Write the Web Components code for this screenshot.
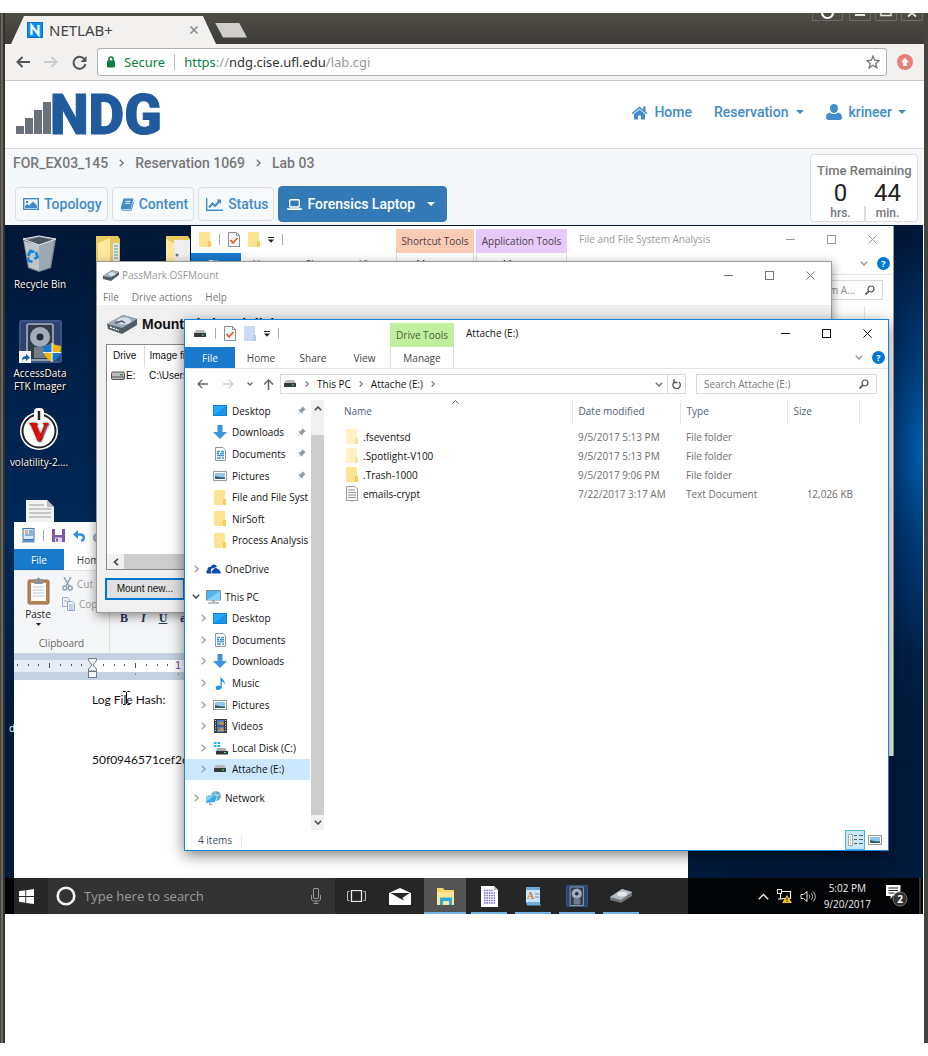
<!DOCTYPE html>
<html lang="en">
<head>
<meta charset="utf-8">
<title>NETLAB+</title>
<style>
html,body{margin:0;background:#fff}
body{padding:13px 0;box-sizing:border-box;min-height:100vh;display:flex;flex-direction:column;
  --win:"Open Sans","Noto Sans",sans-serif;--ubuntu:"Noto Sans","Open Sans",sans-serif;--rb:Roboto,sans-serif;font-family:var(--rb)}
browser-frame{flex:1}
</style>
</head>
<body>
<browser-frame>
  <tab-strip></tab-strip>
  <tool-bar></tool-bar>
  <lab-header></lab-header>
  <lab-bar></lab-bar>
  <remote-desktop></remote-desktop>
</browser-frame>
<script>
const ICONS={
favicon:[16,16,`<rect width="16" height="16" fill="#0d6fc4"/><rect x="1" y="1" width="14" height="14" fill="#0b8ff0"/><path d="M4.500 13V3.500L11.500 12.500V3" fill="none" stroke="#fff" stroke-width="2.200"/>`],
tabx:[8,8,`<path d="M.5.5l7 7M7.500.5l-7 7" stroke="#888" stroke-width="1.500"/>`],
back:[14,12,`<path d="M14 6H1.500M6.500 1L1.500 6l5 5" fill="none" stroke="#555" stroke-width="2"/>`],
fwd:[14,12,`<path d="M0 6h12.500M7.500 1l5 5-5 5" fill="none" stroke="#ccc" stroke-width="2"/>`],
reload:[15,15,`<path d="M12.600 4.500A6 6 0 1 0 13.500 9" fill="none" stroke="#555" stroke-width="2"/><path d="M14.500 1v6h-6z" fill="#555"/>`],
lock:[8,12,`<rect y="4.500" width="8" height="7" rx="1" fill="#0b8043"/><path d="M2 5V3a2 2 0 0 1 4 0v2" fill="none" stroke="#0b8043" stroke-width="1.500"/>`],
star:[14,14,`<path d="M7 1l1.700 4.200 4.500.3-3.500 2.900 1.200 4.400L7 10.300l-3.900 2.500 1.200-4.400L.8 5.500l4.500-.3z" fill="none" stroke="#777" stroke-width="1.300"/>`],
update:[16,16,`<circle cx="8" cy="8" r="8" fill="#e57f78"/><path d="M8 3.800l4 4.400H9.800v3.800H6.200V8.200H4z" fill="#fff"/>`],
home:[17,15,`<path d="M8.500 1.500L.5 8.200l1 1.100 7-5.900 7 5.900 1-1.100-2-1.700V1.300h-2.200v3.300z" fill="#428bca"/><path d="M8.500 4.500L3 9.100V14.500h4v-4h3v4h4V9.100z" fill="#428bca"/>`],
user:[16,16,`<ellipse cx="8" cy="4.500" rx="4" ry="4.500" fill="#428bca"/><path d="M4 8.500C1 9 0 11 0 13.500 0 15 1 16 2.500 16h11c1.500 0 2.500-1 2.500-2.500C16 11 15 9 12 8.500 10 10.500 6 10.500 4 8.500z" fill="#428bca"/>`],
caret:[8,4,`<path d="M0 0h8L4 4z" fill="currentColor"/>`],
caretS:[5,3,`<path d="M0 0h5L2.500 3z" fill="currentColor"/>`],
pic:[16,12,`<rect x=".7" y=".7" width="14.600" height="10.600" fill="none" stroke="#428bca" stroke-width="1.400"/><circle cx="4" cy="4" r="1.300" fill="#428bca"/><path d="M2 10V8l2.500-2 1.500 1.500L10 3.500l4 4V10z" fill="#428bca"/>`],
book:[14,13,`<path d="M3.500 .5h10L10.500 11H2C.8 11 .8 9.800 1 9z" fill="#428bca"/><path d="M1.500 10.500c-.3 1.200.5 1.700 1.500 1.700h8.200L13.500 4" fill="none" stroke="#428bca" stroke-width="1"/><path d="M5.500 3.300h5M5 5.300h5" stroke="#fff" stroke-width=".9"/>`],
chart:[17,13,`<path d="M.7 0v12.300H17" fill="none" stroke="#428bca" stroke-width="1.400"/><path d="M3 9.500l3.500-4 2.500 2.500 4.500-5" fill="none" stroke="#428bca" stroke-width="2"/><path d="M10.500 1.500H15V6z" fill="#428bca"/>`],
laptop:[15,11,`<rect x="2.700" y=".7" width="9.600" height="7.300" rx="1" fill="none" stroke="#fff" stroke-width="1.400"/><path d="M0 9.200h15v.6c0 .6-.5 1.200-1.200 1.200H1.200C.5 11 0 10.400 0 9.800z" fill="#fff"/>`],
recycle:[36,40,`<path d="M1 5L17 2l17 3-5 29-12 4-11-4z" fill="#7f8d98"/><path d="M3 7l14-4 15 3-15 5z" fill="#4a555e"/><path d="M2 7l15 4v26L7 33z" fill="#c6cdd3" opacity=".9"/><path d="M17 11l15-5-4 27-11 4z" fill="#a1acb5" opacity=".9"/><path d="M1 5L17 2l17 3-17 6z" fill="none" stroke="#e8ecef"/><path d="M6 22l2.500-5 4 1M14 18l1.500 5-3 2M10.500 28l-4-1.500-.5-3" fill="none" stroke="#1a86d8" stroke-width="2.800"/>`],
ftk:[43,43,`<rect width="43" height="43" rx="2" fill="#2a4370"/><rect x="1" y="1" width="41" height="41" rx="2" fill="none" stroke="#4a669a"/><rect x="8" y="4" width="26" height="36" rx="2" fill="#323d4b" stroke="#8d9bab" stroke-width="2"/><circle cx="21" cy="17" r="10" fill="#a2adb8"/><circle cx="21" cy="17" r="3.500" fill="#1c2a3c"/><path d="M15 27h13v11H15z" fill="#707d8b"/><path d="M24 26q5 0 9-3 4 3 9 3c0 8-3 13-9 16-6-3-9-8-9-16z" fill="#f2b50a"/><path d="M24 26q5 0 9-3v9.500h-8.500zM33 32.500h8.500C40.500 37 37.500 40 33 42z" fill="#1677d2"/><path d="M24 32.500h18M33 23v19" stroke="#fff"/><rect y="31" width="12" height="12" fill="#f2f5fa"/><path d="M3 41c0-4 2-5 4-5v-2l4 3.500L7 41v-2c-2 0-3 0-4 2z" fill="#1b5faf"/>`],
vol:[40,44,`<circle cx="20" cy="23" r="19" fill="#fff"/><circle cx="20" cy="23" r="16.500" fill="#fff" stroke="#222" stroke-width="2"/><rect x="15" y="0" width="10" height="12" rx="4" fill="#fff"/><path d="M20 3v9" stroke="#222" stroke-width="2.500"/><text x="20" y="33" text-anchor="middle" font-family="Liberation Serif" font-weight="700" font-size="27" fill="#f00">V</text>`],
page:[28,22,`<path d="M0 0h21l7 7v15H0z" fill="#f2f2f2"/><path d="M21 0v7h7z" fill="#bbb"/><path d="M3 5h15M3 9h22M3 13h22M3 17h22" stroke="#999" stroke-width="1.200"/>`],
deskfolder:[28,28,`<path d="M0 1h22l2 3v24H0z" fill="#eac75f"/><path d="M2 8L14 3v25H2z" fill="#ffe9a0"/><path d="M17 8h6v20h-6z" fill="#dfeaf0"/><path d="M18 11h4M18 14h4M18 17h4M18 20h4M18 23h4" stroke="#49a"/>`],
deskfolder2:[28,28,`<path d="M0 1h22l2 3v24H0z" fill="#eac75f"/><path d="M0 4l8 4v20H0z" fill="#ffe9a0"/><path d="M8 5h16v23H8z" fill="#eee"/><circle cx="11" cy="20" r="1.500" fill="#777"/>`],
folder:[12,15,`<path d="M0 1C0 .4.400 0 1 0h10v15H1c-.6 0-1-.4-1-1z" fill="#fde492"/><path d="M9 9h3v6H9z" fill="#f5cc55"/>`],
folderdim:[12,15,`<path d="M0 1C0 .4.400 0 1 0h10v15H1c-.6 0-1-.4-1-1z" fill="#fef1c5"/><path d="M9 9h3v6H9z" fill="#fae3a2"/>`],
folderblue:[12,15,`<path d="M0 0h11v9h1v6H0z" fill="#c9dcf3"/><path d="M9 9h3v6H9z" fill="#b5ceec"/>`],
check:[12,15,`<path d="M.5.5h8l3 3v11H.5z" fill="#f7f8fa" stroke="#8a8f98"/><path d="M8.500.5v3h3" fill="none" stroke="#8a8f98"/><path d="M2.500 8l2.500 3 4.500-5" fill="none" stroke="#ea5b2b" stroke-width="1.800"/>`],
txt:[12,15,`<path d="M.5.5h8.500l2.500 2.500v11.500H.5z" fill="#fafafa" stroke="#999"/><path d="M2 4h7M2 6.500h8M2 9h8M2 11.500h8" stroke="#888" stroke-width=".9"/>`],
qa:[6,6,`<path d="M0 .5h6" stroke="#222"/><path d="M0 2.500h6L3 5.800z" fill="#222"/>`],
drive:[14,8,`<path d="M3 0h8l2 3H1z" fill="#b7babd"/><rect x="1" y="3" width="12" height="4" rx=".5" fill="#3a3a3a"/><rect x="9" y="4.500" width="2" height="1" fill="#3f5"/>`],
driveC:[15,15,`<path d="M1 2h2.500v2H1zM4.500 2H7v2H4.500zM1 5h2.500v2H1zM4.500 5H7v2H4.500z" fill="#10b4f4"/><path d="M4 8h8l2 3H3z" fill="#a9acaf"/><rect x="3" y="11" width="12" height="3.500" rx=".5" fill="#333"/><rect x="11" y="12" width="2" height="1" fill="#3f5"/>`],
hdd:[14,10,`<rect x=".5" y="1" width="13" height="7.500" rx="1.500" fill="#bdbdbd" stroke="#555"/><path d="M1 6h12" stroke="#555"/><rect x="9" y="3" width="3" height="1.500" fill="#486"/>`],
osf:[30,20,`<path d="M0 10L16 1l14 4v6L15 20 1 15z" fill="#505c64"/><path d="M0 10L16 1l14 4-15 9z" fill="#9aacb8"/><ellipse cx="17" cy="7" rx="7" ry="3.500" fill="#d7e1e7"/><path d="M8 9l7-2 3 2" stroke="#556" fill="none" stroke-width="1.500"/><path d="M3 13l9 3.500" stroke="#fff" stroke-width="1.500" stroke-dasharray="2 1"/>`],
osfs:[16,11,`<path d="M0 6L9 0l7 2v3L8 11 0 9z" fill="#505c64"/><path d="M0 6L9 0l7 2-8 5.500z" fill="#9aacb8"/><ellipse cx="9" cy="4" rx="3.500" ry="1.800" fill="#d7e1e7"/>`],
osft:[22,14,`<path d="M0 8L12 0l10 3v4L11 14 0 11z" fill="#6d7378"/><path d="M0 8L12 0l10 3-11 8z" fill="#b4bbc0"/><ellipse cx="12" cy="5" rx="5" ry="2.600" fill="#e2e6e8"/>`],
desk:[14,11,`<rect width="14" height="11" fill="#0b82dc"/><rect x="1" y="1" width="12" height="9" fill="#2ba6f7"/><path d="M1 10L13 1v9z" fill="#1695ee"/>`],
down:[14,14,`<path d="M4.500 0h5v7H14L7 14 0 7h4.500z" fill="#3b94e0"/>`],
docs:[11,14,`<path d="M.5.5h7.500l2.500 2.500v10.500H.5z" fill="#fff" stroke="#8e969e"/><path d="M2 4.500h3M6 4.500h3M2 6.500h2M5 6.500h4M2 8.500h7M2 11h4M7 11h2" stroke="#3d96cd" stroke-width="1.300"/>`],
pics:[14,10,`<rect x=".5" y=".5" width="13" height="9" fill="#fff" stroke="#999"/><rect x="2" y="2" width="10" height="6" fill="#8fc7ee"/><path d="M2 8V5l4 1 6 .5V8z" fill="#31615f"/>`],
cloud:[15,10,`<path d="M2 9.500C0 9.500-.3 7 1.500 6 1 3.500 3.500 2 5 3 6-.5 10.500 0 11 3L6 4.500C4.500 5 4.500 8 6 9.500z" fill="#0f4db0"/><path d="M7 9.500c-2-.5-1.500-3 0-3.200C7.500 3.500 11 3 12 5.500c1.500-.3 2 .8 1.800 1.800 1.500.2 1.500 2.200 0 2.200z" fill="#0f4db0"/>`],
pc:[15,14,`<rect x=".5" y=".5" width="14" height="9.500" fill="#50b4f0" stroke="#7b8c99"/><path d="M1 10L14 1v9z" fill="#85cef8"/><path d="M6 10h3v2H6z" fill="#aaa"/><path d="M2 13h11" stroke="#8b99a3" stroke-width="1.200"/>`],
music:[11,14,`<path d="M5.500 0C6 3 10.500 3.500 9.500 8.500 9 6 7 5.500 6.800 5.500V11C6.800 12.800 5 14 3 14S.5 12.500.7 11.500C1 10 3.500 9 5.500 10z" fill="#1e96ec"/>`],
video:[13,14,`<rect width="13" height="14" fill="#393b40"/><rect x="3" y="1" width="7" height="5.500" fill="#4a7fc0"/><rect x="3" y="7.500" width="7" height="5.500" fill="#4a7fc0"/><path d="M4 5l4-3 2 4zM4 12l4-4 2 4z" fill="#e08c2c"/><path d="M1.500 1v12M11.500 1v12" stroke="#ddd" stroke-dasharray="1 1.500"/>`],
net:[15,14,`<circle cx="10" cy="5" r="4.800" fill="#5aa9c9"/><path d="M8 1c3 2 4 5 2 8M6 4h8" stroke="#c9e6ef" fill="none"/><path d="M0 5l9-1v7l-9 1z" fill="#39a9ee"/><path d="M0 5l9-1-9 7z" fill="#82cdf6"/><path d="M3 12l4 1.500-4 .5" fill="#999"/>`],
pin:[9,9,`<path d="M5.500.3L8.700 3.500 7.500 3.900 5.800 5.700 5.500 7.800 3.600 5.900.5 8.500 3.100 5.400 1.200 3.500 3.300 3.200 5.100 1.500z" fill="#8c99a5"/>`],
chevR:[5,8,`<path d="M.7.7L4.200 4 .7 7.300" fill="none" stroke="currentColor" stroke-width="1.300"/>`],
chevRs:[4,6,`<path d="M.7.5L3.200 3 .7 5.500" fill="none" stroke="currentColor" stroke-width="1.200"/>`],
chevD:[8,5,`<path d="M.8.8L4 4 7.200.8" fill="none" stroke="currentColor" stroke-width="1.500"/>`],
chevDs:[6,4,`<path d="M.5.5L3 3 5.500.5" fill="none" stroke="currentColor" stroke-width="1.300"/>`],
chevU:[8,5,`<path d="M.8 4.200L4 1l3.200 3.200" fill="none" stroke="currentColor" stroke-width="1.500"/>`],
chevUthin:[11,7,`<path d="M.8 6.200L5.500 1.500l4.700 4.700" fill="none" stroke="currentColor" stroke-width="1.400"/>`],
chevL:[6,8,`<path d="M5 .8L1.500 4 5 7.200" fill="none" stroke="#444" stroke-width="1.600"/>`],
sortU:[7,4,`<path d="M.5 3.500l3-3 3 3" fill="none" stroke="#666"/>`],
aL:[11,10,`<path d="M11 5H1M5 1L1 5l4 4" fill="none" stroke="currentColor" stroke-width="1.300"/>`],
aR:[11,10,`<path d="M0 5h10M6 1l4 4-4 4" fill="none" stroke="currentColor" stroke-width="1.300"/>`],
aU:[11,11,`<path d="M5.500 11V1M1 5.500L5.500 1 10 5.500" fill="none" stroke="currentColor" stroke-width="1.500"/>`],
refresh:[9,10,`<path d="M2.500 2.800A3.700 3.700 0 1 0 7 3" fill="none" stroke="#555" stroke-width="1.300"/><path d="M2 0v3.500h3.500" fill="none" stroke="#555" stroke-width="1.300"/>`],
mag:[10,10,`<circle cx="6" cy="4" r="3" fill="none" stroke="#555" stroke-width="1.200"/><path d="M3.800 6.200L.5 9.500" stroke="#555" stroke-width="1.700"/>`],
help:[13,13,`<circle cx="6.500" cy="6.500" r="6.500" fill="#0078d7"/><text x="6.500" y="10" text-anchor="middle" font-family="Open Sans" font-weight="700" font-size="9" fill="#fff">?</text>`],
min:[9,9,`<path d="M0 4.500h9" stroke="currentColor"/>`],
max:[9,9,`<rect x=".5" y=".5" width="8" height="8" fill="none" stroke="currentColor"/>`],
cls:[9,9,`<path d="M.4.4l8.200 8.200M8.600.4L.4 8.600" stroke="currentColor"/>`],
details:[15,12,`<path d="M.5.5h4v11h-4z" fill="#fff" stroke="#aaa"/><path d="M2 3h1M2 6h1" stroke="#3a8"/><path d="M2 9h1" stroke="#e55"/><path d="M6 1.500h3M11 1.500h4M6 5.500h3M11 5.500h4M6 9.500h3M11 9.500h4" stroke="#59636c"/>`],
wp:[13,15,`<rect x="1" y=".5" width="11" height="11" fill="#d8e9f8" stroke="#3f78ae"/><path d="M3 3h3M3 5h3" stroke="#e77d2a"/><path d="M7 3h4M7 5h4M3 7h8" stroke="#3f78ae"/><path d="M1 12h11l1 2.500H0z" fill="#5b93c4"/>`],
save:[13,13,`<path d="M0 0h13v13H0z" fill="#7b5ba6"/><rect x="3" width="7" height="6" fill="#fff"/><rect x="3" y="8.500" width="7" height="4.500" fill="#e3dcec"/><rect x="4" y="9.500" width="2" height="3" fill="#7b5ba6"/>`],
undo:[12,12,`<path d="M3 4.500h4c5 0 5 5.500 1 6.500" fill="none" stroke="#2f95dc" stroke-width="2.500"/><path d="M0 4.500L5 0v9z" fill="#2f95dc"/>`],
redo:[12,12,`<path d="M9 4.500H5C0 4.500 0 10 4 11" fill="none" stroke="#9fb1c8" stroke-width="2.500"/><path d="M12 4.500L7 0v9z" fill="#9fb1c8"/>`],
paste:[23,28,`<rect x="1" y="3" width="21" height="24" rx="1.500" fill="#b98352" stroke="#9d6b3e"/><rect x="4" y="6" width="15" height="18" fill="#fdfdfd"/><path d="M6 10h11M6 13h11M6 16h11M6 19h11" stroke="#bcd"/><rect x="7" y="2" width="9" height="5" rx="1" fill="#8b929a"/><circle cx="11.500" cy="2" r="1.500" fill="#8b929a"/>`],
cut:[11,14,`<path d="M2 0l5 9M9 0L4 9" stroke="#8d9db2" stroke-width="1.500"/><circle cx="2.800" cy="11" r="2" fill="none" stroke="#8d9db2" stroke-width="1.400"/><circle cx="8.200" cy="11" r="2" fill="none" stroke="#8d9db2" stroke-width="1.400"/>`],
copy:[13,14,`<path d="M.5.5h5l2 2v7h-7z" fill="#eef3fa" stroke="#93a8c6"/><path d="M5.500 4.500h5l2 2v7h-7z" fill="#eef3fa" stroke="#93a8c6"/><path d="M7 8h4M7 10h4M7 12h4M2 4h3" stroke="#93a8c6"/>`],
ibeam:[7,14,`<path d="M0 .5h2.500l1 1 1-1H7M3.500 1.500v11M0 13.500h2.500l1-1 1 1H7" stroke="#111" fill="none"/>`],
start:[15,15,`<path d="M0 2.200L6.300 1.300V7H0zM7.200 1.200L15 0v7H7.200zM0 8h6.300v5.700L0 12.800zM7.200 8H15v7l-7.800-1.100z" fill="#fff"/>`],
cortana:[20,20,`<circle cx="10" cy="10" r="8.300" fill="none" stroke="#f2f2f2" stroke-width="2.600"/>`],
mic:[10,16,`<rect x="2.500" y=".5" width="5" height="10" rx=".5" fill="none" stroke="#999"/><path d="M.5 7v4c0 1 1 2 2 2h5c1 0 2-1 2-2V7M5 13v2.500M2.500 15.500h5" fill="none" stroke="#999"/>`],
tasks:[19,12,`<rect x="4.500" y=".5" width="10" height="11" fill="none" stroke="#eee" stroke-width="1.200"/><path d="M2.500 1.500H.5v9h2M16.500 1.500h2v9h-2" fill="none" stroke="#bbb"/>`],
mail:[22,17,`<path d="M0 5L11 0l11 5v12H0z" fill="#fff"/><path d="M1.500 5h19l-7 5 1.500 2.500L11 10.500z" fill="#262626"/>`],
exp:[19,17,`<path d="M1 0h6l1.500 2H18v15H1z" fill="#fbd667"/><path d="M1 4h17v13H1z" fill="#fde697"/><path d="M4 9.500h12V17h-3v-4H7v4H4z" fill="#2ea8e0"/>`],
hexa:[17,21,`<path d="M0 0H13L17 4v17H0z" fill="#fff"/><path d="M13 0v4h4z" fill="#bbb"/><path d="M3 4.500h9M3 7h11M3 9.500h11M3 12h11M3 14.500h11M3 17h11" stroke="#6a6ae0" stroke-width="1.500" stroke-dasharray="1.500 .9"/>`],
wpt:[16,19,`<rect x="1" width="14" height="16" fill="#c9e6fa"/><rect x="1" width="14" height="3" fill="#6aa9d8"/><text x="2" y="12" font-family="Liberation Serif" font-weight="700" font-size="10" fill="#e4762d">A</text><path d="M10 7h4M10 10h4" stroke="#5a92be"/><path d="M1 15h13l2 3.500H2z" fill="#72afd8"/>`],
tnet:[15,14,`<path d="M3.500 2.500h10v7h-8M3.500 5v5M1 10h5" fill="none" stroke="#eee" stroke-width="1.200"/><rect x=".5" y=".5" width="4" height="4" fill="#111" stroke="#eee"/><path d="M10 6l5 8H5z" fill="#f5c211"/><path d="M10 8.500v3M10 12v1" stroke="#222"/>`],
sound:[16,13,`<path d="M1 4.500h2.500L7 1.500v10L3.500 8.500H1z" fill="none" stroke="#eee"/><path d="M9 4.500c1 1 1 3 0 4M11 3c2 2 2 5 0 7M13 1.500c3 3 3 7 0 10" fill="none" stroke="#ccc"/>`],
notif:[22,22,`<path d="M0 0h14.500v11H7l-2.500 3v-3H0z" fill="#fff"/><path d="M2.500 3h9.500M2.500 5.500h9.500M2.500 8h6" stroke="#222"/><circle cx="14" cy="14" r="7" fill="#333" stroke="#777"/><text x="14" y="17.500" text-anchor="middle" font-family="Open Sans" font-weight="700" font-size="10" fill="#fff">2</text>`],
frameI:[111,8,`<g fill="none" stroke="#6d6b63"><path d="M.5 0v7.500h30V0M37.500 0v7.500h21V0M63.500 0v7.500h21V0M89.500 0v7.500h21V0"/></g><path d="M10 0a5.500 5 0 0 0 11 0" fill="none" stroke="#fff" stroke-width="2.200"/><path d="M43 2h10" stroke="#e8e8e4" stroke-width="2"/><path d="M69 0v2.500h10V0" fill="none" stroke="#e8e8e4" stroke-width="1.500"/><path d="M96 3.500L100 0l4 3.500" fill="none" stroke="#e8e8e4" stroke-width="1.800"/>`],
ruler:[171,27,`<rect width="171" height="27" fill="#c5d1e1"/><rect y="7" width="78" height="12" fill="#e7ecf4"/><rect x="78" y="7" width="93" height="12" fill="#fff"/><path d="M3.500 11v2M14.500 11v2M24.500 11v2M35.500 10v5M46.500 11v2M57.500 11v2M67.500 11v2M89.500 11v2M100.500 11v2M110.500 11v2M121.500 10v5M132.500 11v2M143.500 11v2M153.500 11v2" stroke="#44546c"/><path d="M121.500 20v2M164.500 20v2" stroke="#8795a8"/><path d="M74.500 5.500h8v2L79 12l3.500 4v2h-8v-2l3.500-4-3.500-4.500z" fill="#f4f6f9" stroke="#6b7c92"/><rect x="74.500" y="18.500" width="8" height="6" fill="#f4f6f9" stroke="#6b7c92"/><text x="161" y="16" font-family="Liberation Sans" font-size="11" fill="#6b3fa0">1</text>`]
};
function define(tag,css,html){
  const t=document.createElement('template');
  t.innerHTML='<style>:host,*{box-sizing:border-box}button,input,textarea{font:inherit;color:inherit;background:none;border:0;padding:0;margin:0;border-radius:0;min-width:0}a{color:inherit;text-decoration:none}'+css+'</style>'+html;
  customElements.define(tag,class extends HTMLElement{
    constructor(){super();this.attachShadow({mode:'open'}).append(t.content.cloneNode(true));}
  });
}
customElements.define('ui-icon',class extends HTMLElement{
  connectedCallback(){
    if(this.shadowRoot)return;
    const [w,h,b]=ICONS[this.getAttribute('name')];
    this.attachShadow({mode:'open'}).innerHTML=`<style>:host{display:block;flex:none}svg{display:block}</style><svg width="${w}" height="${h}" viewBox="0 0 ${w} ${h}" aria-hidden="true">${b}</svg>`;
  }
});
const I=n=>`<ui-icon name="${n}"></ui-icon>`;

define('browser-frame',`
:host{display:flex;flex-direction:column;padding:0 4px 0 5px;background:linear-gradient(90deg,#45443f 0 1px,#6a675e 1px 3px,#33322e 3px 5px,#45443f 5px)}
.page{flex:1;background:#fff;display:flex;flex-direction:column}`,
`<div class="page"><slot></slot></div>`);

define('tab-strip',`
:host{display:flex;height:31px;background:linear-gradient(#504e47,#3c3b37);padding:3px 1px 0 6px;align-items:flex-end;font:15px/20px var(--ubuntu);color:#444}
.tab{width:205px;height:28px;background:#f2f1f0;clip-path:polygon(0 100%,13px 0,192px 0,100% 100%);display:flex;align-items:center;padding:0 18px 0 16px;gap:6px}
.tab span{flex:1}
.new{width:32px;height:15px;background:#cfcecc;clip-path:polygon(0 0,24px 0,100% 100%,8px 100%);align-self:center;margin-left:-1px}
.ctl{margin-left:auto;align-self:flex-start;height:8px;margin-top:-3px}`,
`<div class="tab">${I('favicon')}<span>NETLAB+</span><button aria-label="Close tab">${I('tabx')}</button></div><button class="new" aria-label="New tab"></button><div class="ctl">${I('frameI')}</div>`);

define('tool-bar',`
:host{display:flex;height:37px;align-items:center;background:#f2f1f0;border-bottom:1px solid #ccc;padding:0 11px 0 11px;font:13px/20px var(--ubuntu);gap:14px}
.url{flex:1;height:28px;border:1px solid #b0b0b0;border-radius:3px;background:#fff;display:flex;align-items:center;padding:0 6px 0 9px;gap:9px;color:#0b8043;margin:0 -4px 0 -4px}
.sep{width:1px;height:16px;background:#bbb}
.t{flex:1;color:#999}.t b{font-weight:400;color:#0b8043}.t i{font-style:normal;color:#333}`,
`<button aria-label="Back">${I('back')}</button><button aria-label="Forward">${I('fwd')}</button><button aria-label="Reload">${I('reload')}</button>
<div class="url">${I('lock')}<span>Secure</span><span class="sep"></span><div class="t" role="textbox" aria-label="Address"><b>https</b>://<i>ndg.cise.ufl.edu</i>/lab.cgi</div><button aria-label="Bookmark">${I('star')}</button></div><button aria-label="Update">${I('update')}</button>`);

define('lab-header',`
:host{display:flex;height:68px;align-items:center;justify-content:space-between;border-bottom:1px solid #ddd;padding:0 18px 5px 11px;font:500 14px/20px var(--rb);color:#428bca}
.logo,nav,a{display:flex;align-items:center}
.logo{height:62px}
.logo svg{display:block}
nav{gap:22px}a{gap:6px}.c{gap:8px}`,
`<a class="logo" href="#" aria-label="NDG"><svg width="150" height="68" viewBox="0 0 150 68"><path d="M0 48h8v8H0zM9 40h8v16H9zM18 32h8v24h-8zM27 24h8v32h-8z" fill="#6a717c"/><text x="34" y="56" font-family="Roboto" font-weight="900" font-size="55" fill="#205b9d" stroke="#205b9d" stroke-width="1">NDG</text></svg></a>
<nav><a href="#">${I('home')}Home</a><a href="#" class="c">Reservation ${I('caret')}</a><a href="#">${I('user')}krineer ${I('caret')}</a></nav>`);

define('lab-bar',`
:host{display:flex;justify-content:space-between;height:76px;background:#f4f8fb;border-right:1px solid #fff;padding:5px 5px 3px 8px;font:500 14px/20px var(--rb);color:#777}
.l{display:flex;flex-direction:column;justify-content:space-between}
nav{display:flex;gap:11px;align-items:center;line-height:18px}
.btns{display:flex;align-items:center;gap:4px;padding-left:2px;color:#428bca}
button{height:34px;border:1px solid #ddd;border-radius:4px;padding:0 5px 0 7px;display:flex;align-items:center;gap:5px;background:#f7fafc}
button.p{height:36px;background:#337ab7;color:#fff;border-color:#337ab7;padding:0 11px 0 8px}
.p ui-icon:last-child{margin-left:7px}
.time{width:108px;height:68px;border:1px solid #ddd;border-radius:4px;background:#fff;text-align:center;font-size:13px;line-height:18px;padding:7px 6px 0;white-space:nowrap}
.row{display:flex}.row div{flex:1;font-size:12px;line-height:15px;position:relative}
.row b{display:block;font-weight:400;font-size:24px;line-height:26px;color:#222}
.row div+div::before{content:"";position:absolute;left:0;bottom:-1px;width:2px;height:16px;background:#ddd}`,
`<div class="l"><nav><a href="#">FOR_EX03_145</a>${I('chevR')}<a href="#">Reservation 1069</a>${I('chevR')}<a href="#">Lab 03</a></nav>
<div class="btns"><button>${I('pic')}Topology</button><button>${I('book')}Content</button><button>${I('chart')}Status</button><button class="p">${I('laptop')}Forensics Laptop ${I('caret')}</button></div></div>
<div class="time">Time Remaining<div class="row"><div><b>0</b>hrs.</div><div><b>44</b>min.</div></div></div>`);

define('win-controls',`
:host{display:flex;height:27px;flex:none}
button{width:41px;display:grid;place-items:center}`,
`<button aria-label="Minimize">${I('min')}</button><button aria-label="Maximize">${I('max')}</button><button aria-label="Close">${I('cls')}</button>`);

define('desk-icon',`
:host{display:flex;flex-direction:column;align-items:center;width:80px;gap:4px;font:10px/13px var(--win);color:#fff;text-align:center;text-shadow:1px 1px 2px #000,0 0 2px #000}`,
`<slot name="icon"></slot><span><slot></slot></span>`);

define('nav-item',`
:host{display:flex;align-items:center;flex:1;padding-left:15px;white-space:nowrap;overflow:hidden}
:host([top]){padding-left:8px}
:host([sel]){background:#cce8ff}
.ch{width:6px;color:#a0a0a0;display:flex;justify-content:center}
.ic{width:16px;margin:0 4px 0 6px;display:flex;justify-content:center}
.tx{overflow:hidden;flex:1}
::slotted([slot=pin]){margin-right:4px}`,
`<span class="ch"><slot name="chev"></slot></span><span class="ic"><slot name="icon"></slot></span><span class="tx"><slot></slot></span><slot name="pin"></slot>`);
const N=(icon,text,o='')=>`<nav-item ${o.includes('t')?'top':''} ${o.includes('s')?'sel':''}>${o.includes('c')?'<ui-icon slot="chev" name="chevR"></ui-icon>':''}${o.includes('d')?'<ui-icon slot="chev" name="chevD" style="color:#444"></ui-icon>':''}<ui-icon slot="icon" name="${icon}"></ui-icon>${text}${o.includes('p')?'<ui-icon slot="pin" name="pin"></ui-icon>':''}</nav-item>`;

const ribbon=`
.title{display:flex;height:27px}
.quick{width:205px;display:flex;align-items:center;padding:0 0 0 8px;gap:8px}
.sep{width:1px;height:11px;background:#aaa}
.ctx{width:64px;height:24px;margin-top:3px;display:grid;place-items:center;line-height:12px}
.name{padding-left:12px;flex:1;line-height:27px;white-space:nowrap}
.tabs{display:flex;height:22px;border-bottom:1px solid #e3e3e3;padding-right:3px}
.tabs button{width:52px;color:#444}
.tabs .file{width:50px;height:21px;background:#1979ca;color:#fff}
.tabs .man{width:64px;border:1px solid #ddd;border-width:0 1px}
.tail{margin-left:auto;display:flex;align-items:center;gap:9px;color:#999}`;

define('explorer-window',`
:host{display:flex;flex-direction:column;background:#fff;border:1px solid #1883d7;box-shadow:0 4px 14px rgba(0,0,0,.5);font:10px/14px var(--win);color:#111}
${ribbon}
.addr{display:flex;align-items:center;height:30px;margin-bottom:1px;padding:0 11px 0 12px;gap:10px;color:#666}
.addr .dim{color:#ccc;margin-left:5px}.addr .hist{margin-left:3px}
.box{height:20px;border:1px solid #d9d9d9;display:flex;align-items:center}
.path{flex:1;margin-left:-4px;padding-left:2px;gap:8px;color:#111}
.path ui-icon{color:#777}
.path .r{margin-left:auto}
.path .rf{border-left:1px solid #d9d9d9;height:18px;width:18px;display:grid;place-items:center;margin-left:-4px}
.search{width:181px;padding:0 7px}
.search input{flex:1;color:#777;width:100px}
.search input::placeholder{color:#777;opacity:1}
.main{display:flex;flex:1;min-height:0}
.nav{width:125px;display:flex;flex-direction:column;gap:7px;margin-right:1px}
.g{display:flex;flex-direction:column}.g1{height:151px}.g2{height:21px}.g3{height:194px}
.sb{width:13px;background:#cdcdcd;display:flex;flex-direction:column;justify-content:space-between}
.sb span{background:#f0f0f0;display:flex;justify-content:center;color:#444}
.sb .u{height:35px;padding-top:6px}.sb .dn{height:15px;padding-top:5px}
.list{flex:1;padding-left:14px;position:relative}
table{border-collapse:collapse;table-layout:fixed;width:521px;color:#6d6d6d}
th{font-weight:400;text-align:left;color:#4c607a;height:24px;padding:0 6px 3px;border-right:1px solid #e5e5e5}
tbody::before{content:"";display:block;height:3px}
td{height:19px;padding:0 6px;white-space:nowrap}
td:first-child{color:#111}
td div{display:flex;align-items:center;gap:5px;padding-left:2px}
td:last-child{text-align:right}
.sort{position:absolute;left:128px;top:0}
.status{display:flex;height:20px;align-items:center;padding:0 3px 0 13px;color:#3a4a66}
.status i{width:1px;height:11px;background:#e5e5e5;margin-left:9px}
.status .v{width:20px;height:20px;display:grid;place-items:center}
.status .on{margin-left:auto;background:#cbe8f6;border:1px solid #4db6e5}`,
`<div class="title"><div class="quick">${I('drive')}<span class="sep"></span>${I('check')}${I('folderblue')}${I('qa')}<span class="sep"></span></div><div class="ctx" style="background:#c0ef9d;color:#46603a">Drive Tools</div><div class="name">Attache (E:)</div><win-controls></win-controls></div>
<div class="tabs"><button class="file">File</button><button>Home</button><button>Share</button><button style="width:51px">View</button><button class="man">Manage</button><div class="tail">${I('chevD')}${I('help')}</div></div>
<div class="addr">${I('aL')}<span class="dim">${I('aR')}</span><span class="hist">${I('chevDs')}</span>${I('aU')}
<div class="box path">${I('drive')}${I('chevRs')}<span>This PC</span>${I('chevRs')}<span>Attache (E:)</span>${I('chevRs')}<span class="r">${I('chevD')}</span><button class="rf" aria-label="Refresh">${I('refresh')}</button></div>
<div class="box search"><input aria-label="Search Attache (E:)" placeholder="Search Attache (E:)">${I('mag')}</div></div>
<div class="main"><div class="nav"><div class="g g1">${N('desk','Desktop','p')}${N('down','Downloads','p')}${N('docs','Documents','p')}${N('pics','Pictures','p')}${N('folder','File and File Syst')}${N('folder','NirSoft')}${N('folder','Process Analysis')}</div>
<div class="g g2">${N('cloud','OneDrive','tc')}</div>
<div class="g g3">${N('pc','This PC','td')}${N('desk','Desktop','c')}${N('docs','Documents','c')}${N('down','Downloads','c')}${N('music','Music','c')}${N('pics','Pictures','c')}${N('video','Videos','c')}${N('driveC','Local Disk (C:)','c')}${N('drive','Attache (E:)','cs')}</div>
<div class="g g2">${N('net','Network','tc')}</div></div>
<div class="sb"><span class="u">${I('chevU')}</span><span class="dn">${I('chevD')}</span></div>
<div class="list"><span class="sort">${I('sortU')}</span><table><colgroup><col style="width:234px"><col style="width:108px"><col style="width:107px"><col style="width:72px"></colgroup><thead><tr><th>Name</th><th>Date modified</th><th>Type</th><th>Size</th></tr></thead><tbody>
<tr><td><div>${I('folderdim')}.fseventsd</div></td><td>9/5/2017 5:13 PM</td><td>File folder</td><td></td></tr>
<tr><td><div>${I('folderdim')}.Spotlight-V100</div></td><td>9/5/2017 5:13 PM</td><td>File folder</td><td></td></tr>
<tr><td><div>${I('folder')}.Trash-1000</div></td><td>9/5/2017 9:06 PM</td><td>File folder</td><td></td></tr>
<tr><td><div>${I('txt')}emails-crypt</div></td><td>7/22/2017 3:17 AM</td><td>Text Document</td><td>12,026 KB</td></tr></tbody></table></div></div>
<div class="status">4 items<i></i><button class="v on" aria-label="Details">${I('details')}</button><button class="v" aria-label="Thumbnails">${I('pics')}</button></div>`);

define('explorer-back',`
:host{display:flex;flex-direction:column;background:#fff;border-right:1px solid #999;font:10px/14px var(--win);color:#444}
${ribbon}
.name,win-controls{color:#999}
.ctx.w1{width:78px}.ctx.w2{width:91px;margin-left:2px}
.tabs .m1{width:78px}.tabs .m2{width:91px;margin-left:2px}
.row{display:flex;justify-content:flex-end;padding:5px 10px 0}
.box{width:182px;height:20px;border:1px solid #d9d9d9;display:flex;align-items:center;justify-content:flex-end;gap:10px;padding-right:7px;color:#888}
.box input{width:150px;text-align:right}.box input::placeholder{color:#888;opacity:1}
.col{height:24px;width:1px;background:#e5e5e5;align-self:flex-end;margin:6px 28px 0 0}`,
`<div class="title"><div class="quick">${I('folder')}<span class="sep"></span>${I('check')}${I('folder')}${I('qa')}<span class="sep"></span></div><div class="ctx w1" style="background:#fdcbb4">Shortcut Tools</div><div class="ctx w2" style="background:#e8c9fb">Application Tools</div><div class="name">File and File System Analysis</div><win-controls></win-controls></div>
<div class="tabs"><button class="file">File</button><button>Home</button><button>Share</button><button style="width:51px">View</button><button class="man m1">Manage</button><button class="man m2">Manage</button><div class="tail">${I('chevD')}${I('help')}</div></div>
<div class="row"><div class="box"><input aria-label="Search folder" placeholder="Search File and File System A...">${I('mag')}</div></div><div class="col"></div>`);

define('osf-mount',`
:host{display:flex;flex-direction:column;background:#f0f0f0;border:1px solid #999;box-shadow:0 3px 10px rgba(0,0,0,.45);font:10px/14px var(--win);color:#777}
.title,.menu{background:#fff;display:flex;align-items:center}
.title{height:26px;padding-left:6px;gap:3px}.title span{flex:1;color:#999}.menu{height:17px;padding-left:6px;gap:13px}
.h{display:flex;align-items:center;gap:5px;padding:7px 10px 8px;font:700 14px/24px "Liberation Sans",sans-serif;color:#111}
.lb{margin:0 9px;flex:1;background:#fff;border:1px solid #888;display:flex;flex-direction:column;justify-content:space-between;font:10px/16px "Liberation Sans",sans-serif;color:#111}
table{border-collapse:collapse;align-self:flex-start}td,th{font-weight:400;text-align:left;padding:0 5px;height:18px;white-space:nowrap}
th{height:22px}th:first-child{border-right:1px solid #ddd;padding-left:6px}
td:first-child{padding:0 0 0 4px;width:37px}
td div{display:flex;align-items:center;gap:1px}
.sb{height:15px;background:#cdcdcd}.sb span{display:grid;place-items:center;width:17px;height:15px;background:#f0f0f0}
.f{padding:8px 8px 12px}.f button{width:80px;height:22px;border:2px solid #0078d7;background:#e1e1e1;font:10px/16px "Liberation Sans",sans-serif;color:#111}`,
`<div class="title">${I('osfs')}<span>PassMark OSFMount</span><win-controls></win-controls></div><div class="menu"><span>File</span><span>Drive actions</span><span>Help</span></div>
<div class="h">${I('osf')}Mounted virtual disks</div>
<div class="lb"><table><tr><th>Drive</th><th>Image file</th></tr><tr><td><div>${I('hdd')}E:</div></td><td>C:\\Users</td></tr></table><div class="sb"><span>${I('chevL')}</span></div></div>
<div class="f"><button>Mount new...</button></div>`);

define('word-pad',`
:host{display:flex;flex-direction:column;background:#fff;font:10px/14px var(--win);color:#444}
.title{display:flex;height:27px;align-items:center;padding-left:8px;gap:8px}
.sep{width:1px;height:11px;background:#aaa}
.tabs{display:flex;height:21px}.tabs button{width:50px}.tabs .f{background:#1979ca;color:#fff}
.rib{height:83px;background:#f5f6f7;display:flex;border-top:1px solid #e3e3e3}
.clip{width:96px;border-right:1px solid #ddd;margin:6px 0 1px;display:grid;grid-template-columns:48px 1fr;grid-template-rows:1fr 16px}
.p{display:flex;flex-direction:column;align-items:center;color:#222;gap:2px}
.cc{display:flex;flex-direction:column;gap:6px;color:#999}.cc button{display:flex;align-items:center;gap:4px;height:14px}
.lab{grid-column:1/3;text-align:center;color:#666}
.fmt{display:flex;align-self:center;gap:13px;padding:12px 0 0 10px;font:700 12px/16px "Liberation Serif",serif;color:#24375a}
.rul{background:#c5d1e1}
textarea{flex:1;resize:none;padding:10px 0 0 78px;font:12px/20px Lato,sans-serif;color:#111;outline:0;overflow:hidden}
.ib{position:absolute;left:109px;top:169px}`,
`<div class="title">${I('wp')}<span class="sep"></span>${I('save')}${I('undo')}${I('redo')}</div>
<div class="tabs"><button class="f">File</button><button style="width:54px">Home</button></div>
<div class="rib"><div class="clip"><button class="p">${I('paste')}<span>Paste</span>${I('caretS')}</button><div class="cc"><button>${I('cut')}Cut</button><button>${I('copy')}Copy</button></div><div class="lab">Clipboard</div></div>
<div class="fmt"><b>B</b><i>I</i><u>U</u><s>abc</s></div></div>
<div class="rul">${I('ruler')}</div>
<textarea aria-label="Document" spellcheck="false">Log File Hash:


50f0946571cef2c6</textarea><span class="ib">${I('ibeam')}</span>`);

define('task-bar',`
:host{display:flex;height:36px;background:linear-gradient(90deg,#020406 9px,#262626 9px 683px,#020406 683px);padding-left:9px;font:10px/16px var(--win);color:#eee}
button{display:grid;place-items:center;width:44px}
.st{width:34px;padding-right:10px}
.se{width:287px;background:#333;display:flex;align-items:center;padding:0 14px 0 8px;gap:8px}
.se input{flex:1;font-size:13px;color:#aaa}.se input::placeholder{color:#9b9b9b;opacity:1}
.tv{width:42px}
.run{position:relative}.run::after{content:"";position:absolute;left:4px;right:4px;bottom:0;height:2px;background:#76b3e6}
.act{background:#545454;width:42px;margin:0 1px}.act::after{left:0;right:0}
.tray{margin-left:auto;display:flex;align-items:center;gap:8px;padding-right:2px}
.clk{text-align:center}
.n{padding-left:7px}
.end{width:2px;height:36px;background:#333;margin-left:3px}`,
`<button class="st" aria-label="Start">${I('start')}</button><div class="se">${I('cortana')}<input aria-label="Search" placeholder="Type here to search">${I('mic')}</div>
<button class="tv" aria-label="Task view">${I('tasks')}</button><button style="width:46px" aria-label="Mail">${I('mail')}</button><button class="run act" aria-label="File Explorer">${I('exp')}</button><button class="run" aria-label="Hex">${I('hexa')}</button><button class="run" aria-label="WordPad">${I('wpt')}</button><button class="run" aria-label="FTK Imager"><svg width="22" height="22" viewBox="0 0 43 43"><g>${ICONS.ftk[2].split('<path d="M24 26q5')[0]}</g></svg></button><button class="run" aria-label="OSFMount">${I('osft')}</button>
<div class="tray">${I('chevUthin')}${I('tnet')}${I('sound')}<div class="clk">5:02 PM<br>9/20/2017</div><span class="n">${I('notif')}</span><span class="end"></span></div>`);

define('remote-desktop',`
:host{display:flex;flex-direction:column;justify-content:flex-end;position:relative;height:689px;overflow:hidden;border-right:1px solid #fff;
background:linear-gradient(90deg,rgba(0,0,0,0) 0 600px,#001638 840px,rgba(0,22,56,0) 100%),radial-gradient(ellipse 130px 210px at 100% 225px,#0060ae,#003b78 45%,rgba(0,34,78,0)),linear-gradient(#001737,#002450 30%,#002a58 45%,#001b3c 70%,#001b3c)}
desk-icon,word-pad,explorer-back,osf-mount,explorer-window,.lbl{position:absolute}
.lbl{font:10px/13px var(--win);color:#fff}
task-bar{position:relative}`,
`<desk-icon style="left:-5px;top:9px"><ui-icon slot="icon" name="recycle"></ui-icon>Recycle Bin</desk-icon>
<desk-icon style="left:-5px;top:95px"><ui-icon slot="icon" name="ftk"></ui-icon>AccessData<br>FTK Imager</desk-icon>
<desk-icon style="left:-6px;top:183px"><ui-icon slot="icon" name="vol"></ui-icon>volatility-2....</desk-icon>
<desk-icon style="left:-5px;top:275px"><ui-icon slot="icon" name="page"></ui-icon></desk-icon>
<desk-icon style="left:65px;top:10px"><ui-icon slot="icon" name="deskfolder"></ui-icon></desk-icon>
<desk-icon style="left:135px;top:10px"><ui-icon slot="icon" name="deskfolder2"></ui-icon></desk-icon>
<span class="lbl" style="left:4px;top:497px">d</span>
<word-pad style="left:9px;top:297px;width:674px;height:357px"></word-pad>
<explorer-back style="left:186px;top:1px;width:703px;height:530px"></explorer-back>
<osf-mount style="left:91px;top:36px;width:736px;height:352px"></osf-mount>
<explorer-window style="left:179px;top:94px;width:705px;height:532px"></explorer-window>
<task-bar></task-bar>`);
</script>
</body>
</html>
